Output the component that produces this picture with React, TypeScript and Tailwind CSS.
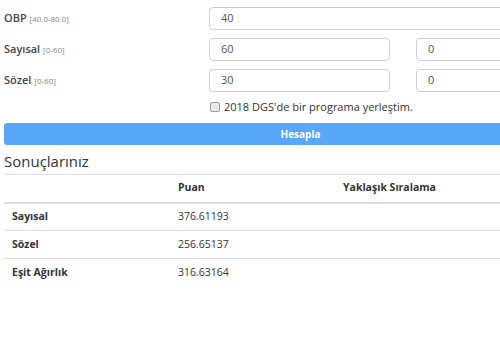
import React from "react";

const font = { fontFamily: '"Open Sans", "DejaVu Sans", sans-serif' };

function Field({ value, className }: { value: string; className: string }) {
    return (
        <div
            className={
                "h-[23px] border border-[#cfcfcf] rounded-[4px] flex items-center px-[11px] text-[11px] text-[#555] " +
                className
            }
        >
            {value}
        </div>
    );
}

const rows = [
    { name: "Sayısal", score: "376.61193" },
    { name: "Sözel", score: "256.65137" },
    { name: "Eşit Ağırlık", score: "316.63164" },
];

export default function App() {
    return (
        <div className="w-[500px] h-[350px] overflow-hidden bg-white text-[#333]" style={font}>
            <div className="w-[593px] ml-[4px]">
                <div className="flex items-center mt-[7px] h-[23px]">
                    <div className="w-[205px] text-[11px] font-semibold text-[#444]">
                        OBP <span className="text-[8px] font-normal text-[#888]">[40.0-80.0]</span>
                    </div>
                    <Field value="40" className="w-[388px]" />
                </div>
                <div className="flex items-center mt-[8px] h-[23px]">
                    <div className="w-[205px] text-[11px] font-semibold text-[#444]">
                        Sayısal <span className="text-[8px] font-normal text-[#888]">[0-60]</span>
                    </div>
                    <Field value="60" className="w-[181px]" />
                    <Field value="0" className="w-[181px] ml-[26px]" />
                </div>
                <div className="flex items-center mt-[8px] h-[23px]">
                    <div className="w-[205px] text-[11px] font-semibold text-[#444]">
                        Sözel <span className="text-[8px] font-normal text-[#888]">[0-60]</span>
                    </div>
                    <Field value="30" className="w-[181px]" />
                    <Field value="0" className="w-[181px] ml-[26px]" />
                </div>
                <div className="flex items-center mt-[9px] ml-[206px] h-[12px] text-[11px]">
                    <span className="w-[10px] h-[10px] rounded-[2px] border border-[#9a9a9a] bg-[#e9e9e9] mr-[4px]" />
                    2018 DGS'de bir programa yerleştim.
                </div>
                <div className="mt-[10px] h-[22px] rounded-[3px] bg-[#58a7f8] flex items-center justify-center text-white text-[10px] font-bold">
                    Hesapla
                </div>
                <div className="mt-[5px] text-[15px] leading-[22px] text-[#333]">Sonuçlarınız</div>
                <table className="mt-[2px] w-full text-[10.5px] border-collapse">
                    <thead>
                        <tr className="border-t border-[#ddd] border-b-2">
                            <th className="w-[166px] h-[28px] px-[8px] text-left font-bold"></th>
                            <th className="w-[165px] px-[8px] text-left font-bold">Puan</th>
                            <th className="px-[8px] text-left font-bold">Yaklaşık Sıralama</th>
                        </tr>
                    </thead>
                    <tbody>
                        {rows.map((r, i) => (
                            <tr key={r.name} className={i < rows.length - 1 ? "border-b border-[#ddd]" : ""}>
                                <td className="h-[28px] px-[8px] font-bold">{r.name}</td>
                                <td className="px-[8px]">{r.score}</td>
                                <td className="px-[8px]"></td>
                            </tr>
                        ))}
                    </tbody>
                </table>
            </div>
        </div>
    );
}
